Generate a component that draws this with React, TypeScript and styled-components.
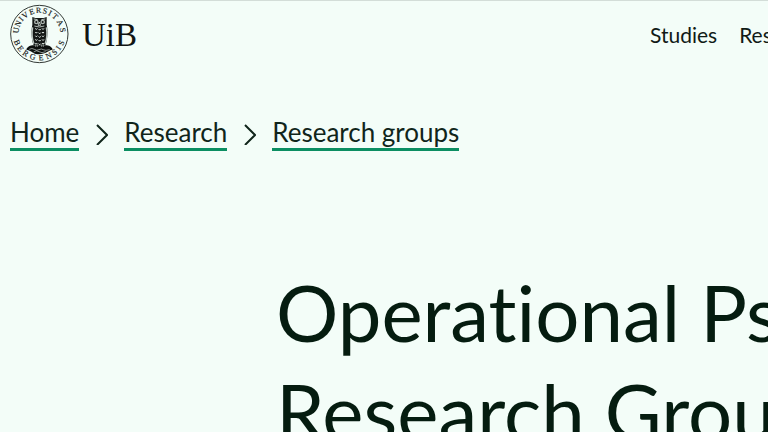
import React from "react";
import styled, { createGlobalStyle } from "styled-components";

const GlobalStyle = createGlobalStyle`
  *, *::before, *::after { box-sizing: border-box; }
  body {
    margin: 0;
    background: #f3fdf8;
    color: #051c10;
    font-family: Lato, "Noto Sans", sans-serif;
    font-variant-ligatures: none;
    overflow: hidden;
  }
`;

const Page = styled.div`
  min-height: 100vh;
  overflow: hidden;
  border-top: 1px solid #d3ddd8;
`;

const Header = styled.header`
  display: flex;
  align-items: flex-start;
  justify-content: space-between;
  padding: 3px 0 0 10px;
`;

const Brand = styled.a`
  display: flex;
  align-items: center;
  gap: 12px;
  color: #111513;
  text-decoration: none;
`;

const Wordmark = styled.span`
  padding-top: 2px;
  font: 33px/40px "Liberation Serif", serif;
`;

const SealArt = styled.svg`
  display: block;
  width: 60px;
  height: 60px;
`;

const Nav = styled.nav`
  display: flex;
  gap: 22px;
  width: 118px;
  padding-top: 17px;
  overflow: hidden;
`;

const NavLink = styled.a`
  flex: none;
  color: #111a16;
  font-size: 21px;
  line-height: 28px;
  text-decoration: none;
`;

const Breadcrumb = styled.nav`
  padding: 52px 10px 0;
`;

const Trail = styled.ol`
  display: flex;
  align-items: center;
  gap: 17px;
  margin: 0;
  padding: 0;
  list-style: none;
`;

const Crumb = styled.li`
  display: flex;
  align-items: center;
  gap: 16px;
`;

const CrumbLink = styled.a`
  display: block;
  border-bottom: 3px solid #0b8e62;
  color: #10251b;
  font-size: 26px;
  line-height: 32px;
  text-decoration: none;
`;

const Chevron = styled.svg`
  display: block;
  width: 12px;
  height: 22px;
  fill: none;
  stroke: #10251b;
  stroke-width: 2;
`;

const Main = styled.main`
  padding: 112px 0 0 276px;
`;

const Title = styled.h1`
  margin: 0;
  font-size: 78px;
  font-weight: 400;
  line-height: 99px;
  white-space: nowrap;
`;

const topLetters: [string, number][] = [
  ["U", -81], ["N", -64], ["I", -50], ["V", -37], ["E", -19], ["R", -2],
  ["S", 14], ["I", 27], ["T", 42], ["A", 62], ["S", 80],
];

const bottomLetters: [string, number][] = [
  ["B", 69], ["E", 52], ["R", 35], ["G", 16], ["E", -4], ["N", -23],
  ["S", -40], ["I", -54], ["S", -68],
];

const feathers = [84, 95, 106, 117, 128];

function Seal() {
  return (
    <SealArt viewBox="30 11 180 180" aria-hidden="true">
      <circle cx="118" cy="101" r="86" fill="none" stroke="#333a36" strokeWidth="3" />
      <g
        fontFamily="Liberation Serif, serif"
        fontSize="24"
        textAnchor="middle"
        fill="#171b19"
        stroke="#171b19"
        strokeWidth="0.5"
      >
        {topLetters.map(([letter, angle]) => (
          <text key={angle} x="118" y="38" transform={`rotate(${angle} 118 101)`}>{letter}</text>
        ))}
        {bottomLetters.map(([letter, angle]) => (
          <text key={angle} x="118" y="180" transform={`rotate(${angle} 118 101)`}>{letter}</text>
        ))}
      </g>
      <path d="M79 148c2-9 13-13 21-13h37c9 0 19 4 21 13-7 1-12 4-18 8-8 6-31 8-41 1-6-4-11-8-20-9Z" fill="#0c0f0d" />
      <path d="M88 147q8-5 15 0t14 1 13 0 19 0M101 155q8-7 16-1t20 0" fill="none" stroke="#e1ebe6" strokeWidth="1.8" />
      <path d="M97 50l9 3h25l9-3v24c4 13 3 45-4 61h-35c-7-16-8-48-4-61Z" fill="#141816" />
      <path d="M98 81c-3 17-2 35 4 50M139 81c3 17 2 35-4 50" fill="none" stroke="#bcc7c1" strokeWidth="4" />
      <circle cx="109" cy="65" r="7" fill="#aab4ae" />
      <circle cx="128" cy="65" r="7" fill="#aab4ae" />
      <circle cx="109" cy="65" r="3" fill="#111" />
      <circle cx="128" cy="65" r="3" fill="#111" />
      <path d="M118 65l4 10h-8ZM101 56l12 2M136 56l-12 2M103 77q15 6 30 0" fill="none" stroke="#d8e2dc" strokeWidth="2.4" />
      {feathers.map((y) => (
        <path key={y} d={`M106 ${y}q3 7 6 0m4 2q3 7 6 0m4-2q3 7 6 0`} fill="none" stroke="#dfe8e3" strokeWidth="3" />
      ))}
      <path d="M107 132v8m5-8v8m13-8v8m5-8v8" stroke="#dfe8e3" strokeWidth="1.5" />
    </SealArt>
  );
}

const crumbs = ["Home", "Research", "Research groups"];

export default function App() {
  return (
    <>
      <GlobalStyle />
      <Page>
        <Header>
          <Brand href="#">
            <Seal />
            <Wordmark>UiB</Wordmark>
          </Brand>
          <Nav aria-label="Main">
            <NavLink href="#">Studies</NavLink>
            <NavLink href="#">Research</NavLink>
          </Nav>
        </Header>
        <Breadcrumb aria-label="Breadcrumb">
          <Trail>
            {crumbs.map((label, index) => (
              <Crumb key={label}>
                {index > 0 && (
                  <Chevron viewBox="0 0 12 22" aria-hidden="true">
                    <path d="M1 2l10 10L1 22" />
                  </Chevron>
                )}
                <CrumbLink href="#">{label}</CrumbLink>
              </Crumb>
            ))}
          </Trail>
        </Breadcrumb>
        <Main>
          <Title>
            Operational Psychology
            <br />
            Research Group
          </Title>
        </Main>
      </Page>
    </>
  );
}
